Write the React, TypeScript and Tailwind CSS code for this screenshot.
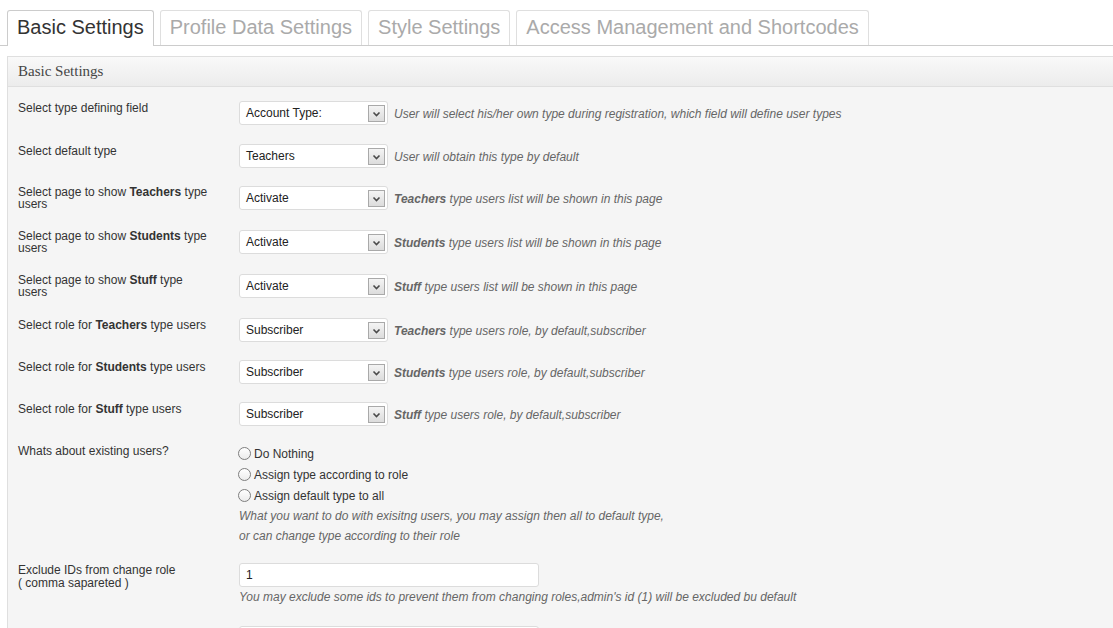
import React from "react";

const tabs = [
  "Basic Settings",
  "Profile Data Settings",
  "Style Settings",
  "Access Management and Shortcodes",
];

function Select({ value }: { value: string }) {
  return (
    <div className="relative flex h-[24px] w-[149px] shrink-0 items-center rounded-[3px] border border-[#dcdcdc] bg-white pl-[6px] text-[12px] text-[#222]">
      <span>{value}</span>
      <div className="absolute right-[2px] top-[3px] flex h-[17px] w-[17px] items-center justify-center border border-[#a9a9a9] bg-gradient-to-b from-[#f4f4f4] to-[#dcdcdc]">
        <svg width="9" height="6" viewBox="0 0 9 6">
          <polyline points="1.5,1.5 4.5,4.5 7.5,1.5" fill="none" stroke="#4a4a4a" strokeWidth="1.6" />
        </svg>
      </div>
    </div>
  );
}

function Row({
  label,
  tall,
  pad = "py-[9px]",
  children,
}: {
  label: React.ReactNode;
  tall?: boolean;
  pad?: string;
  children: React.ReactNode;
}) {
  return (
    <div className={"flex items-start " + pad}>
      <div
        className={
          tall
            ? "h-[26px] w-[221px] shrink-0 pr-[8px] text-[12px] leading-[12px] text-[#333]"
            : "w-[221px] shrink-0 pt-[1px] pr-[8px] text-[12px] leading-[13px] text-[#333]"
        }
      >
        {label}
      </div>
      <div className="flex-1 text-[12px] leading-[18px]">{children}</div>
    </div>
  );
}

function SelectRow({
  label,
  value,
  desc,
  tall,
  pad,
}: {
  label: React.ReactNode;
  value: string;
  desc: React.ReactNode;
  tall?: boolean;
  pad?: string;
}) {
  return (
    <Row label={label} tall={tall} pad={pad}>
      <div className="flex h-[24px] items-center gap-[6px]">
        <Select value={value} />
        <div className="pt-[1px] text-[12px] italic leading-[18px] text-[#666]">{desc}</div>
      </div>
    </Row>
  );
}

function Radio({ label }: { label: string }) {
  return (
    <div className="flex h-[21px] items-center gap-[3px] text-[12px] text-[#333]">
      <span className="ml-[-1px] inline-block h-[13px] w-[13px] rounded-full border border-[#7e7e7e] bg-gradient-to-b from-[#ffffff] to-[#ececec]" />
      <span>{label}</span>
    </div>
  );
}

export default function App() {
  return (
    <div
      className="h-[628px] w-[1113px] overflow-hidden bg-white"
      style={{ fontFamily: '"Liberation Sans", Arial, sans-serif' }}
    >
      {/* tabs */}
      <div className="flex items-end gap-[6px] border-b border-[#cccccc] pl-[7px] pt-[10px]">
        {tabs.map((t, i) => (
          <div
            key={t}
            className={
              i === 0
                ? "mb-[-1px] rounded-t-[3px] border border-b-0 border-[#cccccc] bg-white px-[9px] pb-[7px] pt-[4px] text-[20px] leading-[24px] text-[#333]"
                : "rounded-t-[3px] border border-b-0 border-[#dfdfdf] bg-white px-[9px] pb-[6px] pt-[4px] text-[20px] leading-[24px] text-[#aaaaaa]"
            }
          >
            {t}
          </div>
        ))}
      </div>

      {/* panel */}
      <div className="ml-[7px] mt-[10px] border border-r-0 border-[#dfdfdf] bg-[#f5f5f5]">
        <div
          className="flex h-[30px] items-center border-b border-[#dfdfdf] bg-gradient-to-b from-[#f9f9f9] to-[#ececec] pl-[10px] text-[15px] text-[#464646]"
          style={{ fontFamily: '"Liberation Serif", Georgia, serif' }}
        >
          Basic Settings
        </div>
        <div className="pl-[10px] pt-[5px]">
          <SelectRow
            pad="pt-[9px] pb-[10px]"
            label="Select type defining field"
            value="Account Type:"
            desc="User will select his/her own type during registration, which field will define user types"
          />
          <SelectRow
            label="Select default type"
            value="Teachers"
            desc="User will obtain this type by default"
          />
          <SelectRow
            tall
            label={
              <>
                Select page to show <b>Teachers</b> type
                <br />
                users
              </>
            }
            value="Activate"
            desc={
              <>
                <b>Teachers</b> type users list will be shown in this page
              </>
            }
          />
          <SelectRow
            tall
            label={
              <>
                Select page to show <b>Students</b> type
                <br />
                users
              </>
            }
            value="Activate"
            desc={
              <>
                <b>Students</b> type users list will be shown in this page
              </>
            }
          />
          <SelectRow
            tall
            label={
              <>
                Select page to show <b>Stuff</b> type
                <br />
                users
              </>
            }
            value="Activate"
            desc={
              <>
                <b>Stuff</b> type users list will be shown in this page
              </>
            }
          />
          <SelectRow
            label={
              <>
                Select role for <b>Teachers</b> type users
              </>
            }
            value="Subscriber"
            desc={
              <>
                <b>Teachers</b> type users role, by default,subscriber
              </>
            }
          />
          <SelectRow
            label={
              <>
                Select role for <b>Students</b> type users
              </>
            }
            value="Subscriber"
            desc={
              <>
                <b>Students</b> type users role, by default,subscriber
              </>
            }
          />
          <SelectRow
            label={
              <>
                Select role for <b>Stuff</b> type users
              </>
            }
            value="Subscriber"
            desc={
              <>
                <b>Stuff</b> type users role, by default,subscriber
              </>
            }
          />
          <Row pad="pt-[9px] pb-[8px]" label="Whats about existing users?">
            <div className="mt-[-1px]">
              <Radio label="Do Nothing" />
              <Radio label="Assign type according to role" />
              <Radio label="Assign default type to all" />
              <div className="text-[12px] italic leading-[20px] text-[#666]">
                What you want to do with exisitng users, you may assign then all to default type,
                <br />
                or can change type according to their role
              </div>
            </div>
          </Row>
          <Row
            pad="pt-[9px] pb-[11px]"
            label={
              <>
                Exclude IDs from change role
                <br />( comma sapareted )
              </>
            }
          >
            <div className="flex h-[24px] w-[300px] items-center rounded-[3px] border border-[#dcdcdc] bg-white pl-[6px] text-[12px] text-[#222]">
              1
            </div>
            <div className="mt-[1px] text-[12px] italic leading-[18px] text-[#666]">
              You may exclude some ids to prevent them from changing roles,admin's id (1) will be excluded bu default
            </div>
          </Row>
          <Row label="User list display type">
            <div className="h-[24px] w-[300px] rounded-[3px] border border-[#dcdcdc] bg-white" />
          </Row>
        </div>
      </div>
    </div>
  );
}
